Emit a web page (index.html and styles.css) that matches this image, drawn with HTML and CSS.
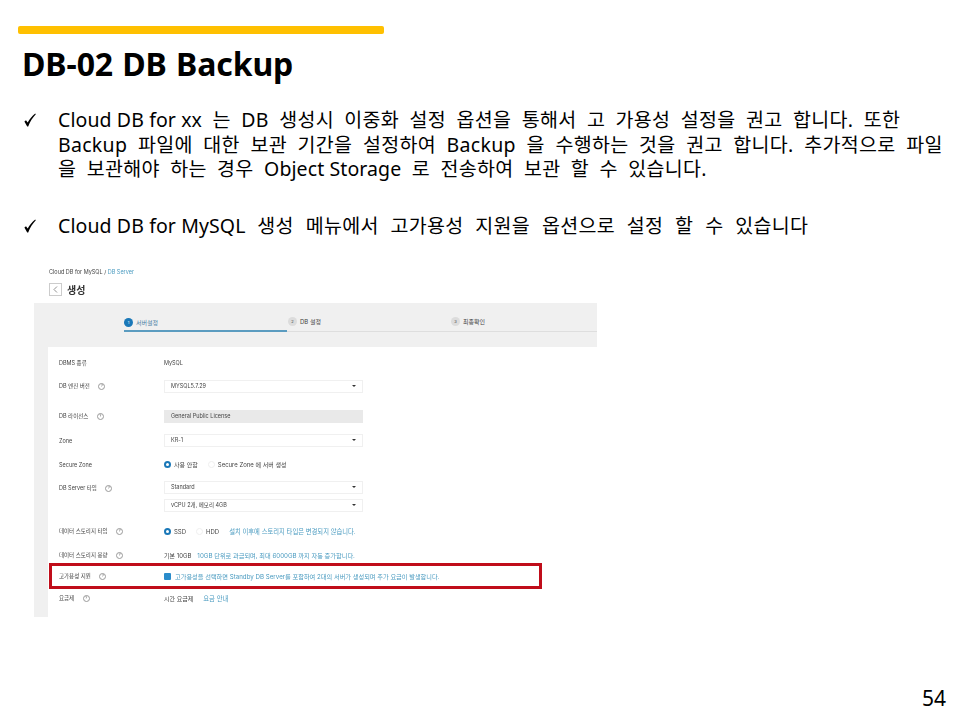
FILE: index.html
```html
<!DOCTYPE html>
<html lang="ko">
<head>
  <title>DB-02 DB Backup</title>
  <meta charset="UTF-8" />
  <link rel="stylesheet" href="styles.css">
</head>
<body>
  <div class="slide">
    <div class="title-bar"></div>
    <h1>DB-02 DB Backup</h1>

    <ul class="points">
      <li>
        <svg class="check" width="12" height="14" viewBox="0 0 12 14"><path d="M.4 8.4 2 7.2 3.7 9.6C5.6 6.2 8 3.2 11.2 .6L11.8 1.2C8.6 4.6 6 8.6 4.2 13.4H3.2Z"/></svg>
        <p><span class="en">Cloud DB for xx</span> 는 DB 생성시 이중화 설정 옵션을 통해서 고 가용성 설정을 권고 합니다. 또한<br><span class="wide">Backup 파일에 대한 보관 기간을 설정하여 Backup 을 수행하는 것을 권고 합니다. 추가적으로 파일</span><br>을 보관해야 하는 경우 <span class="en">Object Storage</span> 로 전송하여 보관 할 수 있습니다.</p>
      </li>
      <li>
        <svg class="check" width="12" height="14" viewBox="0 0 12 14"><path d="M.4 8.4 2 7.2 3.7 9.6C5.6 6.2 8 3.2 11.2 .6L11.8 1.2C8.6 4.6 6 8.6 4.2 13.4H3.2Z"/></svg>
        <p class="loose"><span class="en">Cloud DB for MySQL</span> 생성 메뉴에서 고가용성 지원을 옵션으로 설정 할 수 있습니다</p>
      </li>
    </ul>

    <div class="shot">
      <div class="crumb">Cloud DB for MySQL / <span class="blue">DB Server</span></div>
      <div class="shot-head">
        <span class="back">
          <svg width="5" height="7" viewBox="0 0 5 7"><path d="M4 .5 1 3.5 4 6.5" fill="none" stroke="#777" stroke-width=".8"/></svg>
        </span>
        <b>생성</b>
      </div>

      <div class="steps">
        <div class="step active"><i>1</i>서버설정</div>
        <div class="step"><i>2</i>DB 설정</div>
        <div class="step"><i>3</i>최종확인</div>
      </div>

      <div class="form">
        <div class="row r-dbms"><label>DBMS 종류</label><div>MySQL</div></div>
        <div class="row r-engine"><label>DB 엔진 버전 <em>?</em></label><div class="select">MYSQL5.7.29</div></div>
        <div class="row r-license"><label>DB 라이선스 <em>?</em></label><div class="select locked">General Public License</div></div>
        <div class="row r-zone"><label>Zone</label><div class="select">KR-1</div></div>
        <div class="row r-secure"><label>Secure Zone</label><div class="opts"><span class="radio on"></span>사용 안함<span class="radio"></span>Secure Zone 에 서버 생성</div></div>
        <div class="row r-type"><label>DB Server 타입 <em>?</em></label><div class="select">Standard</div></div>
        <div class="row r-vcpu"><label></label><div class="select">vCPU 2개, 메모리 4GB</div></div>
        <div class="row r-disk"><label>데이터 스토리지 타입 <em>?</em></label><div class="opts"><span class="radio on"></span>SSD<span class="radio"></span>HDD<span class="blue note">설치 이후에 스토리지 타입은 변경되지 않습니다.</span></div></div>
        <div class="row r-size"><label>데이터 스토리지 용량 <em>?</em></label><div class="opts">기본 10GB<span class="blue note">10GB 단위로 과금되며, 최대 6000GB 까지 자동 증가합니다.</span></div></div>
        <div class="row r-ha"><label>고가용성 지원 <em>?</em></label><div class="opts"><span class="tick"></span><span class="blue">고가용성을 선택하면 Standby DB Server를 포함하여 2대의 서버가 생성되며 추가 요금이 발생합니다.</span></div></div>
        <div class="row r-price"><label>요금제 <em>?</em></label><div class="opts">시간 요금제<span class="blue note">요금 안내</span></div></div>
      </div>
    </div>

    <div class="page-no">54</div>
  </div>
</body>
</html>
```

FILE: styles.css
```css
html, body {
  margin: 0;
  padding: 0;
  background: #fff;
}
.slide {
  width: 960px;
  height: 720px;
  box-sizing: border-box;
  padding-top: 26px;
  display: flex;
  flex-direction: column;
  font-family: "Noto Sans", "Noto Sans CJK KR", sans-serif;
  color: #000;
  overflow: hidden;
}
.title-bar {
  width: 366px;
  height: 8px;
  margin-left: 18px;
  background: #ffc000;
  border-radius: 2px;
}
h1 {
  margin: 6px 0 0 22px;
  font-size: 32px;
  line-height: 48px;
  font-weight: 700;
  letter-spacing: -.1px;
  word-spacing: 1px;
}
.points {
  list-style: none;
  margin: 20px 0 0;
  padding: 0;
}
.points li {
  display: flex;
  padding-left: 24px;
  margin-bottom: 32px;
}
.check {
  flex: none;
  margin: 5px 22px 0 0;
}
.points p {
  margin: 0;
  font-size: 19.5px;
  line-height: 24.5px;
  letter-spacing: .3px;
  word-spacing: 5.1px;
  white-space: nowrap;
  font-weight: 400;
}
.points p.loose {
  word-spacing: 6.5px;
}
.points .en {
  letter-spacing: .1px;
  word-spacing: 0;
}
.points .wide {
  word-spacing: 5.3px;
}

/* captured console screen */
.shot {
  width: 563px;
  margin: 1px 0 0 34px;
  font-family: "Inter", "Noto Sans CJK KR", sans-serif;
  font-size: 5.5px;
  color: #444;
  filter: blur(.45px);
}
.blue {
  color: #4a9bc0;
}
.crumb {
  margin: -3px 0 0 15px;
  line-height: 8px;
}
.shot-head {
  display: flex;
  align-items: center;
  gap: 5px;
  margin: 6px 0 6px 15px;
  color: #333;
  font-size: 10px;
}
.back {
  width: 13px;
  height: 13px;
  box-sizing: border-box;
  border: 1px solid #ccc;
  display: flex;
  align-items: center;
  justify-content: center;
}
.steps {
  height: 44px;
  box-sizing: border-box;
  padding: 11px 0 0 90px;
  background: #f0f0f0;
  display: flex;
  font-size: 6px;
  position: relative;
}
.steps::after {
  content: "";
  position: absolute;
  left: 90px;
  right: 0;
  top: 28px;
  height: 1px;
  background: #dedede;
}
.step {
  flex: none;
  width: 163px;
  height: 18px;
  box-sizing: border-box;
  padding-bottom: 3px;
  display: flex;
  align-items: center;
  gap: 3px;
}
.step i {
  width: 9px;
  height: 9px;
  margin-left: 1px;
  border-radius: 50%;
  background: #dcdcdc;
  font-style: normal;
  font-size: 4px;
  display: flex;
  align-items: center;
  justify-content: center;
}
.step.active {
  color: #4a7fa5;
  border-bottom: 2px solid #5b9cc0;
  padding: 1px 0 0;
  position: relative;
  z-index: 1;
}
.step.active i {
  margin-left: 0;
  background: #1a78b8;
  color: #fff;
}
.form {
  display: flow-root;
  height: 270px;
  border-left: 14px solid #f0f0f0;
}
.row {
  display: grid;
  grid-template-columns: 105px 199px;
  align-items: center;
  padding-left: 11px;
}
.row em {
  display: inline-block;
  width: 5px;
  height: 5px;
  margin-left: 7px;
  border: .5px solid #999;
  border-radius: 50%;
  font-style: normal;
  font-size: 3.5px;
  line-height: 5px;
  text-align: center;
  vertical-align: middle;
}
.select {
  height: 13px;
  box-sizing: border-box;
  padding-left: 6px;
  border: 1px solid #f0f0f0;
  line-height: 11px;
  position: relative;
}
.select::after {
  content: "";
  position: absolute;
  right: 6px;
  top: 4px;
  border: 2px solid transparent;
  border-top: 2.5px solid #333;
}
.select.locked {
  background: #e9e9e9;
  border-color: #e9e9e9;
}
.select.locked::after {
  display: none;
}
.opts {
  display: flex;
  align-items: center;
  font-size: 6px;
  white-space: nowrap;
}
.radio {
  width: 7px;
  height: 7px;
  box-sizing: border-box;
  border: .5px solid #eee;
  border-radius: 50%;
  margin: 0 3px 0 10px;
}
.radio.on {
  margin-left: 0;
  border: 2px solid #1a78b8;
}
.note {
  margin-left: 10px;
  font-size: 6.3px;
  white-space: nowrap;
}
.r-size .note {
  margin-left: 6px;
  font-size: 6.2px;
}
.tick {
  flex: none;
  width: 7px;
  height: 7px;
  margin-right: 4px;
  background: #2a8ccb;
  border-radius: 1px;
}
.r-dbms { margin-top: 10px; height: 12px; }
.r-engine { margin-top: 9px; height: 16px; }
.r-license { margin-top: 15px; height: 14px; }
.r-zone { margin-top: 11px; height: 12px; }
.r-secure { margin-top: 12px; height: 13px; }
.r-type { margin-top: 10px; height: 13px; }
.r-vcpu { margin-top: 5px; height: 13px; }
.r-disk { margin-top: 13px; height: 12px; }
.r-size { margin-top: 12px; height: 12px; }
.r-ha {
  margin: 2px 0 0 1px;
  padding-left: 7px;
  width: 493px;
  height: 26px;
  grid-template-columns: 105px 380px;
  border: 3px solid #c00d1a;
  box-sizing: border-box;
}
.r-ha .blue { font-size: 6.2px; }
.r-price { margin-top: 3px; height: 12px; }
.page-no {
  margin: auto 14px 9px auto;
  font-size: 21px;
  line-height: 26px;
}
```
